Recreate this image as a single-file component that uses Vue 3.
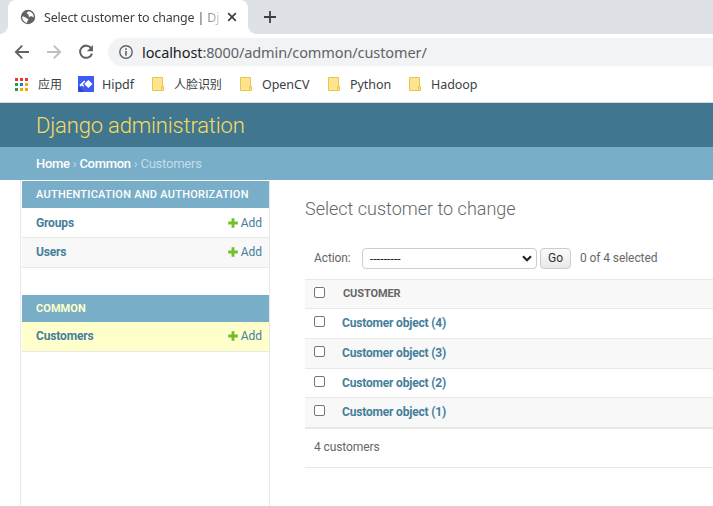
<script setup>
import { ref } from 'vue'

const folders = [
  { name: '人脸识别', cls: 'cjk' },
  { name: 'OpenCV', cls: 'opencv' },
  { name: 'Python', cls: 'python' },
  { name: 'Hadoop', cls: 'hadoop' }
]
const appColors = ['#e8382d', '#e8382d', '#e8382d', '#259b4b', '#1a73e8', '#f5a800', '#259b4b', '#f5a800', '#f5a800']
const modules = [
  { name: 'Authentication and Authorization', models: ['Groups', 'Users'], current: false },
  { name: 'Common', models: ['Customers'], current: true }
]
const customers = [4, 3, 2, 1]
const selected = ref([])
</script>

<template>
  <div class="window">
    <div class="tabstrip">
      <div class="tab">
        <svg class="globe" width="16" height="16" viewBox="0 0 16 16">
          <circle cx="8" cy="8" r="7.2" fill="#5f6368" />
          <path d="M2.2 7.6C4 7.7 5.3 8 6.3 9.1c.7.8 2 .5 2.1 1.5.1.9-1.2 1-1.2 2v1.3C4.3 13.5 2 11 2.2 7.6zM8.2 2.2c-.1 1-1.5 1-1.6 1.9-.1 1 1.4.7 1.9 1.6.4.8-.4 1.4.4 1.9 1.1.7 1.6-.8 2.8-.4.9.3 1 1.2 2 1 .3-3.1-2-5.8-5.5-6z" fill="#fff" />
        </svg>
        <span class="tab-title">Select customer to change | Dj</span>
        <svg class="close" width="10" height="10" viewBox="0 0 10 10"><path d="M1.2 1.2l7.6 7.6M8.8 1.2L1.2 8.8" stroke="#3c4043" stroke-width="1.7" /></svg>
      </div>
      <svg class="plus" width="12" height="12" viewBox="0 0 12 12"><path d="M6 0v12M0 6h12" stroke="#3c4043" stroke-width="1.8" /></svg>
    </div>

    <div class="toolbar">
      <svg width="16" height="16" viewBox="0 0 16 16"><path d="M15 8H2M8.2 1.7L1.9 8l6.3 6.3" fill="none" stroke="#5f6368" stroke-width="1.9" /></svg>
      <svg width="16" height="16" viewBox="0 0 16 16"><path d="M1 8h13M7.8 1.7L14.1 8l-6.3 6.3" fill="none" stroke="#bdbfc2" stroke-width="1.9" /></svg>
      <svg width="16" height="16" viewBox="0 0 16 16"><path d="M13.1 4.1A6.1 6.1 0 1 0 14 9.6" fill="none" stroke="#5f6368" stroke-width="2" /><path d="M15 1v6.2H8.8z" fill="#5f6368" /></svg>
      <div class="omnibox">
        <svg width="14" height="14" viewBox="0 0 14 14"><circle cx="7" cy="7" r="6.2" fill="none" stroke="#5f6368" stroke-width="1.4" /><path d="M7 3.3v1.6M7 6v4.7" stroke="#5f6368" stroke-width="1.6" /></svg>
        <span class="url"><b>localhost</b>:8000/admin/common/customer/</span>
      </div>
    </div>

    <div class="bookmarks">
      <span class="apps"><i v-for="(c, i) in appColors" :key="i" :style="{ background: c }"></i></span>
      <span class="bm apps-label">应用</span>
      <svg class="hipdf" width="16" height="16" viewBox="0 0 16 16"><rect width="16" height="16" fill="#3f5bf5" /><path d="M1 10l5 5.8H1.7L0 14z" fill="#2746c8" /><path d="M10.4 4.1L14.5 8l-4.1 4-4.1-4z" fill="#fff" /><path d="M6.3 4.4l1 1L4.7 8.3l1.5 1.5-1 1-1.5-1.4-1 1L1.4 9z" fill="#fff" /></svg>
      <span class="bm hipdf-label">Hipdf</span>
      <template v-for="f in folders" :key="f.name">
        <svg class="folder" width="12" height="14" viewBox="0 0 12 14"><path d="M.5.5h10v9h1v4H.5z" fill="#ffe48d" stroke="#e7c64e" /><path d="M9.5 13V9.5h1.7" fill="none" stroke="#e7c64e" /></svg>
        <span class="bm" :class="f.cls">{{ f.name }}</span>
      </template>
    </div>

    <header class="header"><span>Django administration</span></header>
    <nav class="breadcrumbs"><span><a>Home</a> › <a>Common</a> › Customers</span></nav>

    <div class="body">
      <aside class="sidebar">
        <section v-for="m in modules" :key="m.name" class="module" :class="{ current: m.current }">
          <h2><span>{{ m.name }}</span></h2>
          <div v-for="name in m.models" :key="name" class="model">
            <span class="model-name">{{ name }}</span>
            <span class="add">
              <svg width="10" height="10" viewBox="0 0 10 10"><path d="M5 .2v9.6M.2 5h9.6" stroke="#70bf2b" stroke-width="2.8" /></svg>
              <span>Add</span>
            </span>
          </div>
        </section>
      </aside>

      <main class="content">
        <h1><span>Select customer to change</span></h1>
        <div class="actions">
          <span class="action-label">Action:</span>
          <div class="select">
            <span>---------</span>
            <svg width="10" height="7" viewBox="0 0 10 7"><path d="M1 1.2l4 4 4-4" fill="none" stroke="#222" stroke-width="2.1" /></svg>
          </div>
          <button type="button">Go</button>
          <span class="counter">{{ selected.length }} of {{ customers.length }} selected</span>
        </div>
        <div class="table">
          <div class="row head"><input type="checkbox"><span>CUSTOMER</span></div>
          <div v-for="id in customers" :key="id" class="row">
            <input v-model="selected" type="checkbox" :value="id"><a>Customer object ({{ id }})</a>
          </div>
        </div>
        <div class="paginator">{{ customers.length }} customers</div>
      </main>
    </div>
  </div>
</template>

<style>
body { overflow: hidden; }
</style>

<style scoped>
* { box-sizing: border-box; }
.window { width: 713px; height: 506px; overflow: hidden; background: #fff; display: flex; flex-direction: column; font-family: Roboto, sans-serif; color: #666; font-size: 12px; white-space: nowrap; }
.window > * { flex: none; }
svg { display: block; flex: none; }
.tabstrip { height: 34px; background: #dee1e6; display: flex; padding-left: 8px; }
.tab { position: relative; width: 240px; background: #fff; border-radius: 8px 8px 0 0; display: flex; align-items: center; padding-left: 12px; }
.tab::before, .tab::after { content: ''; position: absolute; bottom: 0; width: 8px; height: 8px; }
.tab::before { left: -8px; background: radial-gradient(circle at 0 0, #dee1e6 7.5px, #fff 8px); }
.tab::after { right: -8px; background: radial-gradient(circle at 100% 0, #dee1e6 7.5px, #fff 8px); }
.tab-title { width: 176px; margin: 2px 0 0 8px; font: 12.5px/18px "Noto Sans", sans-serif; letter-spacing: -0.2px; color: #3c4043; -webkit-mask-image: linear-gradient(to right, #000 154px, transparent 182px); mask-image: linear-gradient(to right, #000 154px, transparent 182px); }
.close { margin-left: 7px; }
.plus { margin: 11px 0 0 16px; }
.toolbar { height: 36px; display: flex; align-items: center; padding-left: 14px; gap: 16px; }
.omnibox { flex: 1; height: 28px; margin-left: -2px; border-radius: 14px 0 0 14px; background: #f1f3f4; display: flex; align-items: center; padding-left: 11px; }
.url { margin-left: 9px; font: 14.5px/22px "Noto Sans", sans-serif; letter-spacing: -0.1px; color: #5f6368; }
.url b { font-weight: 400; color: #202124; }
.bookmarks { height: 33px; border-bottom: 1px solid #d9dce0; display: flex; align-items: center; padding: 0 0 4px 15px; }
.apps { display: grid; grid-template-columns: repeat(3, 3px); gap: 2px; }
.apps i { width: 3px; height: 3px; }
.bm { margin-top: 2px; font: 12.5px/18px "Noto Sans", "Noto Sans CJK SC", sans-serif; letter-spacing: -0.05px; color: #3c4043; }
.apps-label { margin-left: 10px; width: 24px; font-size: 12px; }
.hipdf { margin-left: 16px; }
.hipdf-label { margin-left: 8px; width: 33px; }
.folder { margin: 0 10px 0 17px; }
.cjk { width: 49px; font-size: 12px; }
.opencv { width: 49px; }
.python { width: 42px; }
.header { height: 44px; background: #417690; color: #f5dd5d; font-size: 22px; font-weight: 300; line-height: 46px; letter-spacing: -0.17px; padding-left: 36px; }
.breadcrumbs { height: 33px; background: #79aec8; color: #c4dce8; font-size: 13px; line-height: 33px; letter-spacing: -0.22px; padding-left: 36px; }
.breadcrumbs a { color: #fff; font-weight: 500; letter-spacing: -0.3px; }
.body { flex: 1 !important; display: flex; }
.sidebar { width: 250px; margin-left: 20px; border: 1px solid #e8e8e8; border-width: 0 1px; padding: 1px 0 0 1px; }
.module { margin-bottom: 27px; }
.module h2 { margin: 0; height: 27px; background: #79aec8; color: #fff; padding-left: 14px; font-size: 11px; font-weight: 500; line-height: 27px; text-transform: uppercase; letter-spacing: 0.26px; }
.module.current h2 { color: #ffc; font-weight: 700; letter-spacing: 0.05px; }
.model { height: 30px; border-bottom: 1px solid #e8e8e8; padding: 0 7px 0 14px; display: flex; align-items: center; justify-content: space-between; color: #447e9b; }
.model:nth-child(3) { background: #f8f8f8; padding-bottom: 2px; }
.current .model { background: #ffc; padding-bottom: 2px; }
.model-name { font-weight: 700; letter-spacing: -0.15px; }
.add { display: flex; align-items: center; gap: 3px; }
.content { flex: 1; margin-left: 35px; min-width: 0; }
h1 { margin: 17px 0 0; font-size: 18px; line-height: 24px; font-weight: 300; color: #666; }
.actions { display: flex; align-items: center; height: 21px; margin: 27px 0 10px; padding-left: 9px; }
.action-label { width: 48px; letter-spacing: -0.1px; margin-top: -2px; }
.select { width: 175px; height: 21px; border: 1px solid #ccc; border-radius: 4px; display: flex; align-items: center; justify-content: space-between; padding: 0 4px 0 7px; color: #222; }
.select span { letter-spacing: 0.1px; }
button { width: 31px; height: 21px; margin: 0 9px 0 3px; padding: 0; border: 1px solid #ccc; border-radius: 4px; background: linear-gradient(#fbfbfb, #e9e9e9); font: 12px/19px Roboto, sans-serif; color: #333; }
.counter { letter-spacing: -0.08px; margin-top: -2px; }
.table { border-top: 1px solid #e8e8e8; border-bottom: 1px solid #e8e8e8; }
.row { height: 30px; border-bottom: 1px solid #e8e8e8; display: flex; padding-left: 9px; }
.row.head { height: 29px; }
.row:nth-child(4) { height: 29px; }
.row:nth-child(odd) { background: #f8f8f8; }
.row input { appearance: none; width: 11px; height: 11px; border: 1px solid #767676; border-radius: 2px; background: #fff; margin: 7px 0 0; }
.row a { margin-left: 17px; line-height: 28px; font-weight: 700; letter-spacing: -0.18px; color: #447e9b; }
.row.head span { margin-left: 18px; line-height: 27px; font-size: 11px; font-weight: 700; letter-spacing: -0.1px; }
.paginator { height: 39px; border-bottom: 1px solid #e8e8e8; padding-left: 9px; line-height: 36px; letter-spacing: -0.1px; }
</style>
